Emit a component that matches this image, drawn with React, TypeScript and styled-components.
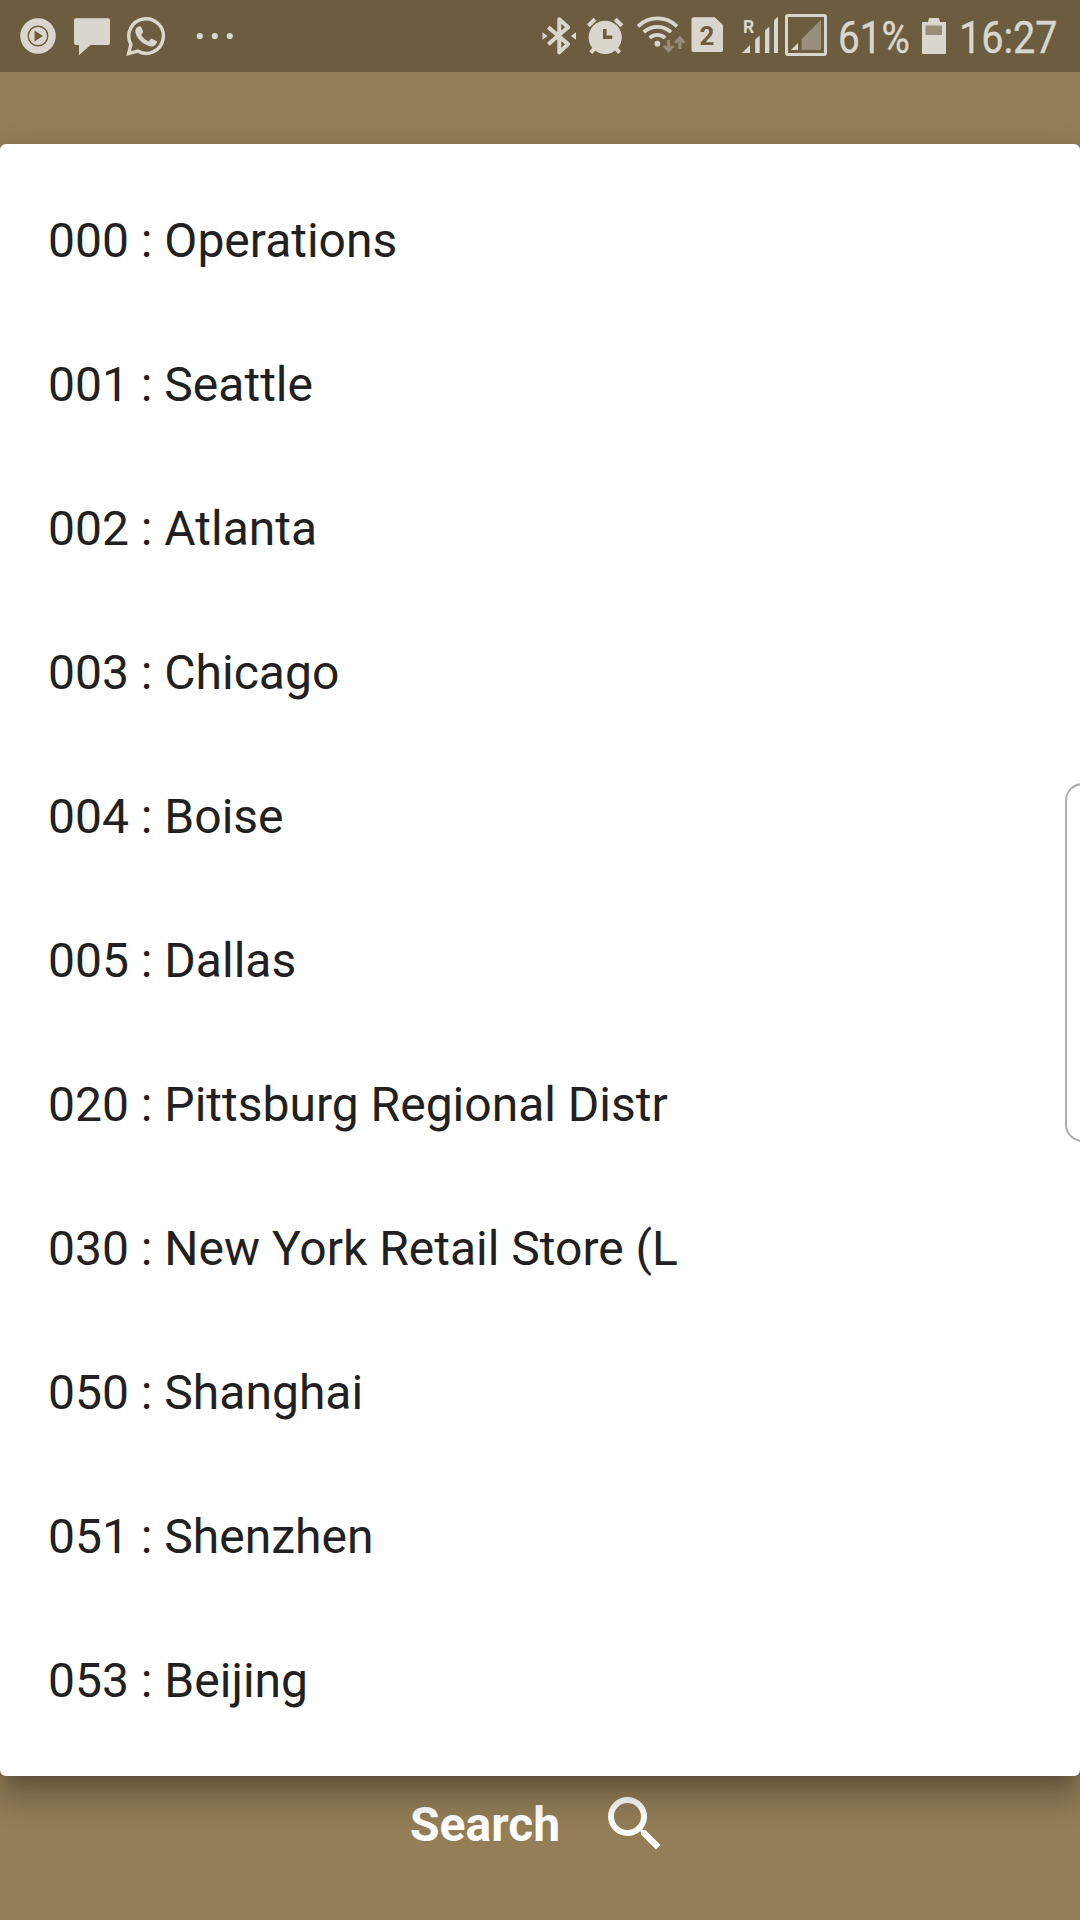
import React from "react";
import styled, { createGlobalStyle } from "styled-components";

const ICON = "#dbd6cd";
const MUTED = "#998e7a";
const BAR = "#6c5d40";

const GlobalStyle = createGlobalStyle`
  html, body { margin: 0; padding: 0; }
  body { background: #937e58; font-family: Roboto, "Noto Sans", sans-serif; }
  * { box-sizing: border-box; }
`;

const Screen = styled.div`
  position: relative;
  display: flex;
  flex-direction: column;
  width: 1080px;
  height: 1920px;
  overflow: hidden;
  background: #937e58;
`;

const StatusBar = styled.header`
  display: flex;
  justify-content: space-between;
  height: 72px;
  flex: none;
  padding: 0 24px 0 20px;
  background: ${BAR};
  position: relative;
  z-index: 2;
`;

const StatusGroup = styled.div`
  display: flex;
  align-items: center;
`;

const Glyph = styled.svg<{ $gap?: number }>`
  display: block;
  flex: none;
  height: 72px;
  margin-left: ${(p) => p.$gap ?? 0}px;
  fill: ${ICON};
`;

const StatusText = styled.span<{ $width: number; $gap: number }>`
  display: block;
  width: ${(p) => p.$width}px;
  height: 72px;
  margin-left: ${(p) => p.$gap}px;
  padding-top: 2px;
  font-size: 45px;
  line-height: 72px;
  white-space: nowrap;
  color: ${ICON};
  -webkit-text-stroke: 0.4px ${ICON};
`;

const Condensed = styled.span<{ $scale: number }>`
  display: inline-block;
  transform: scaleX(${(p) => p.$scale});
  transform-origin: left center;
`;

const Dialog = styled.ul`
  position: relative;
  z-index: 1;
  list-style: none;
  flex: none;
  margin: 72px 0 0;
  padding: 24px 0;
  background: #fff;
  border-radius: 6px;
  box-shadow:
    0 15px 15px -9px rgba(0, 0, 0, 0.2),
    0 24px 30px 3px rgba(0, 0, 0, 0.14),
    0 9px 42px 6px rgba(0, 0, 0, 0.12);
`;

const Option = styled.li`
  display: flex;
  align-items: center;
  height: 144px;
  padding: 2px 48px 0;
  font-size: 48px;
  line-height: 56px;
  color: #212121;
  white-space: pre;
`;

const EdgeHandle = styled.div`
  position: absolute;
  z-index: 3;
  top: 783px;
  right: -20px;
  width: 35px;
  height: 359px;
  border: 2px solid #adadad;
  border-radius: 18px;
`;

const SearchButton = styled.button`
  display: flex;
  align-items: center;
  justify-content: flex-start;
  height: 96px;
  margin: 0;
  padding: 0 0 0 410px;
  border: 0;
  background: none;
  color: #fff;
  font: 700 48px/56px Roboto, sans-serif;
`;

const SearchLabel = styled.span`
  width: 188.500px;
  padding-top: 2px;
  text-align: left;
`;

const SearchIcon = styled.svg`
  width: 72px;
  height: 72px;
  fill: #fff;
`;

const locations = [
  ["000", "Operations"],
  ["001", "Seattle"],
  ["002", "Atlanta"],
  ["003", "Chicago"],
  ["004", "Boise"],
  ["005", "Dallas"],
  ["020", "Pittsburg Regional Distr"],
  ["030", "New York Retail Store (L"],
  ["050", "Shanghai"],
  ["051", "Shenzhen"],
  ["053", "Beijing"],
];

const MusicIcon = () => (
  <Glyph width="36" viewBox="20 0 36 72">
    <circle cx="38" cy="36" r="17.8" />
    <circle cx="38" cy="36" r="9.8" fill="none" stroke={BAR} strokeWidth="1.4" />
    <path d="M34.5 30.5v11l8.5-5.5z" fill={BAR} />
  </Glyph>
);

const MessageIcon = () => (
  <Glyph width="36" $gap={18} viewBox="74 0 36 72">
    <path d="M76 18.3h32a2 2 0 0 1 2 2V43a2 2 0 0 1-2 2H90.500L79 55.200V45h-3a2 2 0 0 1-2-2V20.300a2 2 0 0 1 2-2z" />
  </Glyph>
);

const WhatsAppIcon = () => (
  <Glyph width="40" $gap={16} viewBox="126 0 40 72">
    <path
      d="M128.600 53.600l2.300-9.200a17.300 17.300 0 1 1 6.600 6.700z"
      fill="none"
      stroke={ICON}
      strokeWidth="3.400"
    />
    <path d="M139.800 27c1-.5 2.200-.4 2.700.7l1.700 4c.3.900-.1 1.500-.7 2.200l-1.100 1.400c1.700 3.200 4.200 5.400 7.500 6.700l1.900-2.300c.5-.6 1-.6 1.700-.3l4 2c.8.400.8.700.6 1.600-.6 2.500-3.200 4.100-5.600 3.900-7.700-.8-15.500-8.600-16-14.600-.2-2.300 1.300-4.500 3.300-5.300z" transform="translate(-1.200 -.5)" />
  </Glyph>
);

const MoreIcon = () => (
  <Glyph width="40" $gap={29} viewBox="195 0 40 72">
    <circle cx="199.800" cy="36" r="3.100" />
    <circle cx="214.800" cy="36" r="3.100" />
    <circle cx="229.800" cy="36" r="3.100" />
  </Glyph>
);

const BluetoothIcon = () => (
  <Glyph width="34" viewBox="542 0 34 72">
    <path
      d="M548.300 27.300l19.800 16.800-8.800 8.300V19.300l8.800 8-19.800 16.900"
      fill="none"
      stroke={ICON}
      strokeWidth="4"
      strokeLinejoin="round"
    />
    <path d="M542.500 32.300l5 3.700-5 3.700zM576 32.300l-5 3.700 5 3.700z" />
  </Glyph>
);

const AlarmIcon = () => (
  <Glyph width="37" $gap={11} viewBox="587 0 37 72">
    <circle cx="605.200" cy="37.300" r="16.600" />
    <path
      d="M588.300 25.700l6.700-6.400M615.200 19.300l6.700 6.400M590.800 52.600l4-4.500M619.600 52.600l-4-4.500"
      fill="none"
      stroke={ICON}
      strokeWidth="4"
    />
    <path d="M604.800 29v8.300h7.400" fill="none" stroke={BAR} strokeWidth="3.600" />
  </Glyph>
);

const WifiIcon = () => (
  <Glyph width="49" $gap={13} viewBox="637 0 49 72">
    <g fill="none" stroke={ICON} strokeWidth="3.800">
      <path d="M638 26.300a28 28 0 0 1 39 0" />
      <path d="M643.800 32.200a20 20 0 0 1 27.200 0" />
      <path d="M649.700 38a11 11 0 0 1 15.400 0" />
    </g>
    <circle cx="657.400" cy="43.700" r="2.900" />
    <g fill="none" stroke={MUTED} strokeWidth="3">
      <path d="M668.600 40v11M664 46l4.600 4.700 4.600-4.700" />
      <path d="M679.900 49V38M675.300 42.700l4.600-4.700 4.600 4.700" />
    </g>
  </Glyph>
);

const SimIcon = () => (
  <Glyph width="32" $gap={5} viewBox="691 0 32 72">
    <path d="M693.500 17.300h21.300l8.200 7.700v25a2 2 0 0 1-2 2h-27.500a2 2 0 0 1-2-2V19.300a2 2 0 0 1 2-2z" />
    <text x="707" y="45" textAnchor="middle" fontSize="26" fontWeight="700" fill={BAR}>
      2
    </text>
  </Glyph>
);

const RoamingSignalIcon = () => (
  <Glyph width="37" $gap={18} viewBox="741 0 37 72">
    <text x="743" y="32.500" fontSize="17.500" fontWeight="700">
      R
    </text>
    <path d="M742 53l8-8v8zM755.200 53V39.500l4.500-4V53zM765 53V30.500l4.300-4V53zM774 53V20.500l4-4V53z" />
  </Glyph>
);

const EmptySignalIcon = () => (
  <Glyph width="42" $gap={7} viewBox="785 0 42 72">
    <rect x="786.500" y="15.500" width="39" height="39" rx="1.500" fill="none" stroke={ICON} strokeWidth="3" />
    <path d="M791 50l7-7v7z" />
    <path d="M801.700 50V39l19.300-19.300V50z" fill={MUTED} />
  </Glyph>
);

const BatteryIcon = () => (
  <Glyph width="24" $gap={12} viewBox="922 0 24 72">
    <path d="M929 18h10l1 4h5a1 1 0 0 1 1 1v30a1 1 0 0 1-1 1h-22a1 1 0 0 1-1-1V23a1 1 0 0 1 1-1h5z" />
    <rect x="925.500" y="25.500" width="16.500" height="9.500" fill={MUTED} />
  </Glyph>
);

export default function App() {
  return (
    <Screen>
      <GlobalStyle />
      <StatusBar>
        <StatusGroup>
          <MusicIcon />
          <MessageIcon />
          <WhatsAppIcon />
          <MoreIcon />
        </StatusGroup>
        <StatusGroup>
          <BluetoothIcon />
          <AlarmIcon />
          <WifiIcon />
          <SimIcon />
          <RoamingSignalIcon />
          <EmptySignalIcon />
          <StatusText $width={72} $gap={11}>
            <Condensed $scale={0.86}>61%</Condensed>
          </StatusText>
          <BatteryIcon />
          <StatusText $width={97} $gap={13}>
            <Condensed $scale={0.88}>16:27</Condensed>
          </StatusText>
        </StatusGroup>
      </StatusBar>
      <Dialog>
        {locations.map(([code, name]) => (
          <Option key={code}>{`${code} : ${name}`}</Option>
        ))}
      </Dialog>
      <SearchButton>
        <SearchLabel>Search</SearchLabel>
        <SearchIcon viewBox="0 0 24 24">
          <path d="M15.500 14h-.79l-.28-.27A6.471 6.471 0 0 0 16 9.500 6.500 6.500 0 1 0 9.500 16c1.610 0 3.090-.59 4.230-1.570l.27.28v.79l5 4.990L20.490 19l-4.990-5zm-6 0C7.010 14 5 11.990 5 9.500S7.010 5 9.500 5 14 7.010 14 9.500 11.990 14 9.500 14z" />
        </SearchIcon>
      </SearchButton>
      <EdgeHandle />
    </Screen>
  );
}
